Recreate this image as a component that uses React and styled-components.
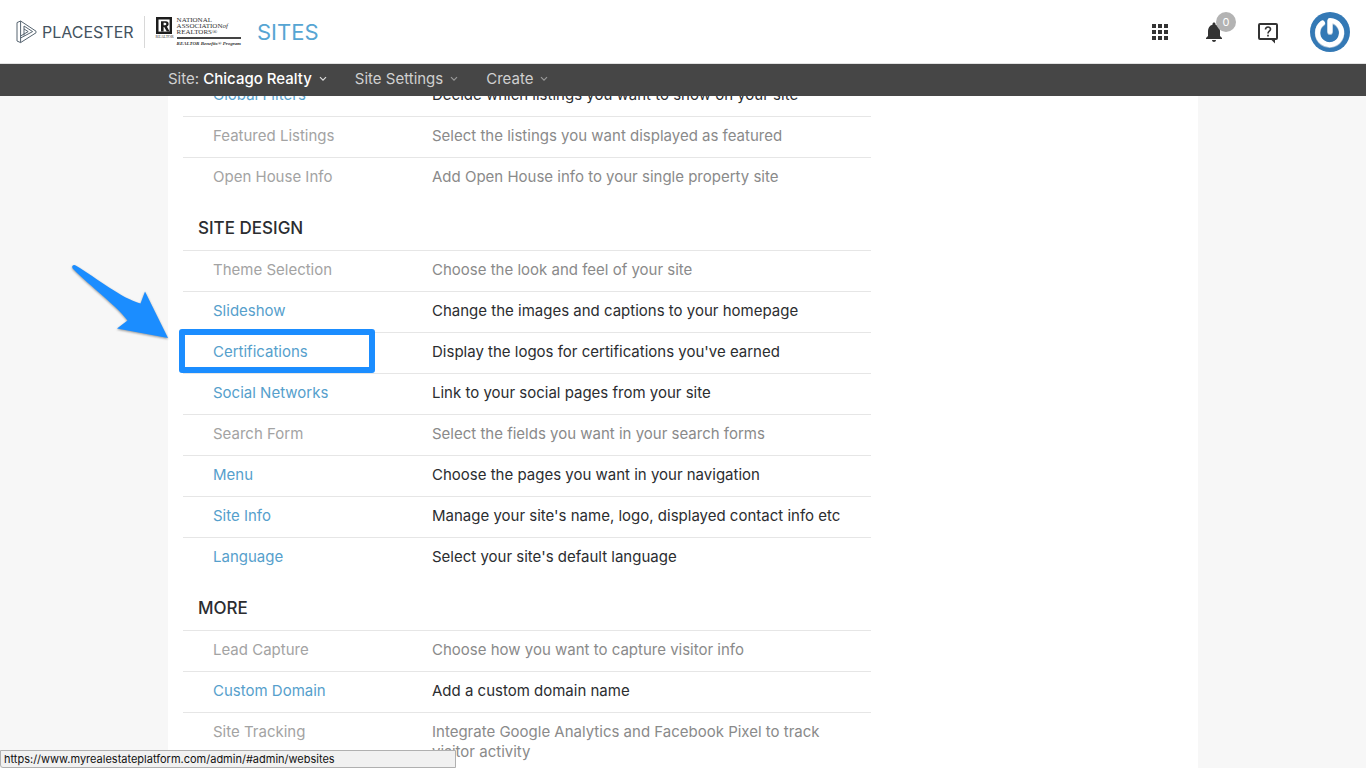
import React from 'react'
import styled, { createGlobalStyle } from 'styled-components'

const groups = [
    {
        title: null,
        rows: [
            { name: 'Global Filters', text: 'Decide which listings you want to show on your site', active: true },
            { name: 'Featured Listings', text: 'Select the listings you want displayed as featured' },
            { name: 'Open House Info', text: 'Add Open House info to your single property site' }
        ]
    },
    {
        title: 'SITE DESIGN',
        rows: [
            { name: 'Theme Selection', text: 'Choose the look and feel of your site' },
            { name: 'Slideshow', text: 'Change the images and captions to your homepage', active: true },
            { name: 'Certifications', text: "Display the logos for certifications you've earned", active: true, marked: true },
            { name: 'Social Networks', text: 'Link to your social pages from your site', active: true },
            { name: 'Search Form', text: 'Select the fields you want in your search forms' },
            { name: 'Menu', text: 'Choose the pages you want in your navigation', active: true },
            { name: 'Site Info', text: "Manage your site's name, logo, displayed contact info etc", active: true },
            { name: 'Language', text: "Select your site's default language", active: true }
        ]
    },
    {
        title: 'MORE',
        rows: [
            { name: 'Lead Capture', text: 'Choose how you want to capture visitor info' },
            { name: 'Custom Domain', text: 'Add a custom domain name', active: true },
            { name: 'Site Tracking', text: 'Integrate Google Analytics and Facebook Pixel to track visitor activity' }
        ]
    }
]

const Chevron = () => (
    <svg width="8" height="6" viewBox="0 0 8 6" fill="none" stroke="currentColor" strokeWidth="1.2" aria-hidden="true">
        <path d="M1 1.2 L4 4.2 L7 1.2" />
    </svg>
)

const PlacesterMark = () => (
    <svg width="21" height="24" viewBox="0 0 21 24" fill="none" stroke="#566470" strokeLinejoin="round" aria-hidden="true">
        <path d="M1 2.6 L4.6 1 L20 11.2 V12.8 L4.6 22.6 L1 21 Z" />
        <path d="M4.6 1 V22.6 M4.6 18 L16.6 11.6 L8 6 V15.6" />
        <path d="M8 9 L12.2 11.6 L4.6 16" />
    </svg>
)

const RealtorMark = () => (
    <svg width="16" height="17" viewBox="0 0 16 17" aria-hidden="true">
        <rect width="16" height="17" fill="#1d1d1d" />
        <path d="M2.5 2.5 H13.6 V14.6 H2.500 Z" fill="#fff" />
        <path d="M5 4.200 H10 C13.400 4.200 13.400 9 10.800 9.600 L13.600 14.600 H10.800 L8.200 9.900 H7.600 V14.600 H5 Z M7.600 5.800 V8.300 H9.200 C10.800 8.300 10.800 5.800 9.200 5.800 Z" fill="#1d1d1d" fillRule="evenodd" />
    </svg>
)

const AppsIcon = () => (
    <svg width="24" height="24" viewBox="0 0 24 24" fill="#333" aria-hidden="true">
        <path d="M4 4h4v4H4zM10 4h4v4h-4zM16 4h4v4h-4zM4 10h4v4H4zM10 10h4v4h-4zM16 10h4v4h-4zM4 16h4v4H4zM10 16h4v4h-4zM16 16h4v4h-4z" />
    </svg>
)

const BellIcon = () => (
    <svg width="24" height="24" viewBox="0 0 24 24" fill="#333" aria-hidden="true">
        <path d="M12 22c1.1 0 2-.9 2-2h-4c0 1.1.9 2 2 2zm6-6v-5c0-3.07-1.63-5.64-4.5-6.32V4c0-.83-.67-1.5-1.5-1.5s-1.5.67-1.5 1.5v.68C7.64 5.36 6 7.92 6 11v5l-2 2v1h16v-1l-2-2z" />
    </svg>
)

const HelpIcon = () => (
    <svg width="24" height="24" viewBox="0 0 24 24" fill="none" stroke="#333" strokeWidth="2" aria-hidden="true">
        <path d="M4 4 H20 Q21 4 21 5 V18 Q21 19 20 19 H4 Q3 19 3 18 V5 Q3 4 4 4 Z" />
        <path d="M14.5 19 H19 V23.6 Z" fill="#333" stroke="none" />
        <path d="M9.5 9.6 C9.5 6 14.7 6.2 14.5 9.3 C14.4 11.2 12 11.2 12 13.4" strokeWidth="1.6" />
        <path d="M12 14.8 V16.6" strokeWidth="1.7" />
    </svg>
)

const AvatarIcon = () => (
    <svg width="40" height="40" viewBox="0 0 40 40" fill="none" aria-hidden="true">
        <circle cx="20" cy="20" r="20" fill="#3479b5" />
        <path d="M12.4 11.6 A12 12 0 1 0 20 9.2 V20.2" stroke="#a5bdd2" strokeWidth="5.6" strokeLinecap="round" strokeLinejoin="round" />
        <path d="M12.4 11 A12 12 0 1 0 20 8.6 V19.5" stroke="#fff" strokeWidth="5" strokeLinecap="round" strokeLinejoin="round" />
    </svg>
)

const Pointer = () => (
    <Arrow width="100" height="80" viewBox="0 0 100 80" aria-hidden="true">
        <path d="M2.8 1 Q0.2 2 1.7 4.5 C21 24 45 41 56.5 56.5 L46 64.5 L97 74 L74 27.5 L69.5 39.5 C50 34 27 15 4.7 1.5 Q3.7 0.7 2.8 1 Z" fill="#1b8dff" />
    </Arrow>
)

const Row = ({ name, text, active, marked }) => (
    <tr>
        <NameCell>
            {active ? <ItemLink href="#admin/websites">{name}</ItemLink> : name}
            {marked && <Marker />}
            {marked && <Pointer />}
        </NameCell>
        <TextCell $active={active}>{text}</TextCell>
    </tr>
)

const App = () => {
    return (
        <Screen>
            <GlobalStyle />
            <Header>
                <Brand href="#">
                    <PlacesterMark />
                    <BrandName>PLACESTER</BrandName>
                </Brand>
                <Partner>
                    <PartnerMark>
                        <RealtorMark />
                        <Tiny>REALTOR</Tiny>
                    </PartnerMark>
                    <PartnerText>
                        <span>NATIONAL</span>
                        <span>ASSOCIATION<i>of</i></span>
                        <span>REALTORS®</span>
                        <Program>REALTOR Benefits® Program</Program>
                    </PartnerText>
                </Partner>
                <Section>SITES</Section>
                <Tools>
                    <IconButton aria-label="Apps"><AppsIcon /></IconButton>
                    <IconButton aria-label="Notifications">
                        <BellIcon />
                        <Badge>0</Badge>
                    </IconButton>
                    <IconButton aria-label="Help"><HelpIcon /></IconButton>
                    <IconButton aria-label="Account"><AvatarIcon /></IconButton>
                </Tools>
            </Header>
            <NavBar>
                <NavInner>
                    <NavButton $bright><span>Site: <b>Chicago Realty</b></span><Chevron /></NavButton>
                    <NavButton><span>Site Settings</span><Chevron /></NavButton>
                    <NavButton><span>Create</span><Chevron /></NavButton>
                </NavInner>
            </NavBar>
            <Main>
                <Sheet>
                    <Settings>
                        <colgroup>
                            <NameCol />
                            <col />
                        </colgroup>
                        {groups.map((group, index) => (
                            <tbody key={index}>
                                {group.title && <tr><GroupTitle colSpan="2" scope="rowgroup">{group.title}</GroupTitle></tr>}
                                {group.rows.map(row => <Row key={row.name} {...row} />)}
                            </tbody>
                        ))}
                    </Settings>
                </Sheet>
            </Main>
            <StatusBar>https://www.myrealestateplatform.com/admin/#admin/websites</StatusBar>
        </Screen>
    )
}

const GlobalStyle = createGlobalStyle`
    * {
        box-sizing: border-box;
    }

    body {
        margin: 0;
        background: #f7f7f7;
        color: #2b2d30;
        font-family: Inter, 'Liberation Sans', sans-serif;
        font-size: 15px;
        line-height: 20px;
    }

    svg {
        display: block;
        flex: none;
    }
`

const Screen = styled.div`
    height: 100vh;
    display: flex;
    flex-direction: column;
    overflow: hidden;
`

const Header = styled.header`
    flex: none;
    height: 64px;
    display: flex;
    align-items: center;
    padding: 0 16px;
    background: #fff;
    border-bottom: 1px solid #e2e2e2;
`

const Brand = styled.a`
    height: 32px;
    display: flex;
    align-items: center;
    gap: 5px;
    padding-right: 10px;
    border-right: 1px solid #d8d8d8;
    color: #44535f;
    text-decoration: none;
`

const BrandName = styled.span`
    font-size: 16px;
`

const Partner = styled.div`
    display: flex;
    gap: 5px;
    margin-left: 11px;
    color: #333;
    font-family: 'Liberation Serif', serif;
`

const PartnerMark = styled.div`
    width: 16px;
`

const Tiny = styled.div`
    font-size: 4px;
    line-height: 5px;
`

const PartnerText = styled.div`
    display: flex;
    flex-direction: column;
    font-size: 7px;
    line-height: 6px;
`

const Program = styled.i`
    margin-top: 2px;
    padding-top: 2px;
    border-top: 2px solid #444;
    font-size: 5px;
    font-weight: bold;
`

const Section = styled.span`
    margin-left: 16px;
    color: #56a5d3;
    font-size: 22px;
    line-height: 24px;
`

const Tools = styled.div`
    display: flex;
    align-items: center;
    gap: 30px;
    margin-left: auto;
`

const IconButton = styled.button`
    position: relative;
    padding: 0;
    background: none;
    border: none;
    cursor: pointer;
`

const Badge = styled.span`
    position: absolute;
    top: -8px;
    right: -10px;
    width: 20px;
    height: 20px;
    border-radius: 50%;
    background: #b3b3b3;
    color: #fff;
    font-family: Inter, sans-serif;
    font-size: 11px;
    line-height: 20px;
    text-align: center;
`

const NavBar = styled.nav`
    flex: none;
    height: 32px;
    background: #464646;
`

const NavInner = styled.div`
    max-width: 1030px;
    margin: 0 auto;
    padding: 5px 0;
    display: flex;
    gap: 28px;
`

const NavButton = styled.button`
    display: flex;
    align-items: center;
    gap: 7px;
    padding: 0;
    background: none;
    border: none;
    color: #d0d0d0;
    font-family: inherit;
    font-size: 15px;
    line-height: 20px;
    cursor: pointer;

    b {
        color: #fff;
        font-weight: 500;
    }

    svg {
        color: ${props => props.$bright ? '#ddd' : '#999'};
    }
`

const Main = styled.main`
    flex: 1;
    min-height: 0;
    display: flex;
    justify-content: center;
    overflow: hidden;
`

const Sheet = styled.div`
    flex: 0 1 1030px;
    padding: 0 15px;
    background: #fff;
`

const Settings = styled.table`
    width: 100%;
    max-width: 688px;
    margin-top: -21px;
    table-layout: fixed;
    border-spacing: 0;
`

const NameCol = styled.col`
    width: 249px;
`

const GroupTitle = styled.th`
    padding: 20px 15px 12px;
    font-size: 17px;
    font-weight: 500;
    text-align: left;
`

const Cell = styled.td`
    border-top: 1px solid #e6e6e6;
    vertical-align: top;
`

const NameCell = styled(Cell)`
    position: relative;
    padding: 9px 0 11px 30px;
    color: #a3a3a3;
`

const TextCell = styled(Cell)`
    padding: 9px 30px 11px 0;
    color: ${props => props.$active ? '#2b2d30' : '#8a8a8a'};
`

const ItemLink = styled.a`
    color: #56a0cc;
    text-decoration: none;
`

const Marker = styled.div`
    position: absolute;
    top: -4px;
    left: -4px;
    width: 196px;
    height: 44px;
    border: 6px solid #1b8dff;
    border-radius: 3px;
    pointer-events: none;
`

const Arrow = styled.svg`
    position: absolute;
    top: -69px;
    left: -112px;
    filter: drop-shadow(0 1px 1px rgba(0, 0, 0, 0.4));
    pointer-events: none;
`

const StatusBar = styled.div`
    position: fixed;
    bottom: 0;
    left: 0;
    width: 456px;
    height: 18px;
    padding: 0 3px;
    background: #f1f1f1;
    border: 1px solid #b0b0b0;
    border-radius: 0 0 0 3px;
    color: #111;
    font-size: 11px;
    line-height: 16px;
`

export default App
